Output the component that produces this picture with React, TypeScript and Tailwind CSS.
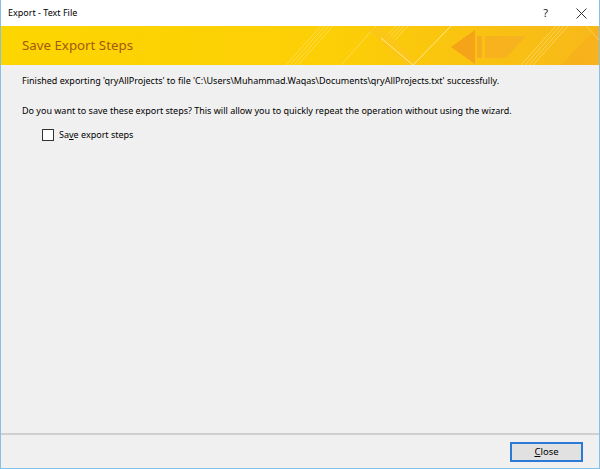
import React from "react";

const font = { fontFamily: '"Noto Sans", "Open Sans", sans-serif' };

function BannerArt() {
  return (
    <svg
      className="absolute inset-0 h-full w-full"
      viewBox="0 0 598 39"
      preserveAspectRatio="none"
    >
      <defs>
        <linearGradient id="bg" x1="0" x2="1" y1="0" y2="0">
          <stop offset="0" stopColor="#fdd600" />
          <stop offset="0.55" stopColor="#fccf06" />
          <stop offset="1" stopColor="#f7b81a" />
        </linearGradient>
      </defs>
      <rect width="598" height="39" fill="url(#bg)" />
      {/* diagonal stripes */}
      <g stroke="#ffe27a" strokeWidth="0.8" opacity="0.8">
        <line x1="285" y1="39" x2="320" y2="0" />
        <line x1="289" y1="39" x2="324" y2="0" />
        <line x1="293" y1="39" x2="328" y2="0" />
        <line x1="297" y1="39" x2="332" y2="0" />
        <line x1="340" y1="39" x2="375" y2="0" />
        <line x1="380" y1="16" x2="395" y2="0" />
        <line x1="384" y1="16" x2="399" y2="0" />
        <line x1="388" y1="16" x2="403" y2="0" />
        <line x1="392" y1="16" x2="407" y2="0" />
        <line x1="520" y1="39" x2="555" y2="0" />
        <line x1="524" y1="39" x2="559" y2="0" />
        <line x1="528" y1="39" x2="563" y2="0" />
        <line x1="532" y1="39" x2="567" y2="0" />
      </g>
      <polygon points="380,0 420,39 404,39 368,4" fill="#fbc51a" opacity="0.7" />
      <polyline points="380,12 412,39 450,0" fill="none" stroke="#ffe88a" strokeWidth="1" />
      {/* arrow */}
      <polygon points="450,21 474,4 474,38" fill="#f5a318" />
      <rect x="476" y="10" width="5" height="22" fill="#f7ab20" />
      <polygon points="484,10 525,10 505,32 484,32" fill="#f6b020" opacity="0.9" />
      <polygon points="560,39 598,0 598,39" fill="#f6ae1e" opacity="0.6" />
      <line x1="585" y1="0" x2="598" y2="14" stroke="#ffe27a" strokeWidth="0.6" />
    </svg>
  );
}

export default function App() {
  return (
    <div
      className="w-[600px] h-[469px] flex flex-col bg-[#f0f0f0] border border-t-0 border-[#84c1e9] text-[#000] overflow-hidden"
      style={font}
    >
      <div className="h-[26px] bg-white flex items-center justify-between pl-[7px] pr-[12px] shrink-0">
        <span className="text-[9px]">Export - Text File</span>
        <div className="flex items-center gap-[28px] text-[#222]">
          <span className="text-[11px]">?</span>
          <svg width="11" height="11" viewBox="0 0 11 11">
            <path d="M0.5 0.5 L10.5 10.5 M10.5 0.5 L0.5 10.5" stroke="#333" strokeWidth="1" />
          </svg>
        </div>
      </div>

      <div className="relative h-[39px] shrink-0 flex items-center pl-[21px]">
        <BannerArt />
        <span className="relative text-[13.3px] text-[#a35a12]">Save Export Steps</span>
      </div>

      <div className="flex-1 flex flex-col pl-[21px] pt-[9px] text-[9px] leading-[13px] whitespace-nowrap">
        <p>
          Finished exporting 'qryAllProjects' to file 'C:\Users\Muhammad.Waqas\Documents\qryAllProjects.txt' successfully.
        </p>
        <p className="mt-[17px]">
          Do you want to save these export steps? This will allow you to quickly repeat the operation without using the wizard.
        </p>
        <label className="flex items-center gap-[5px] mt-[11px] ml-[20px] text-[9px]">
          <span className="w-[12px] h-[12px] border border-[#333] bg-white" />
          <span>
            Sa<span className="underline">v</span>e export steps
          </span>
        </label>
      </div>

      <div className="h-[2px] bg-[#cfcfcf] shrink-0" />
      <div className="h-[33px] shrink-0 flex items-center justify-end pr-[16px]">
        <button className="w-[73px] h-[20px] border-2 border-[#2a7ad6] bg-[#e1e1e1] text-[9.5px] leading-none">
          <span className="underline">C</span>lose
        </button>
      </div>
    </div>
  );
}
